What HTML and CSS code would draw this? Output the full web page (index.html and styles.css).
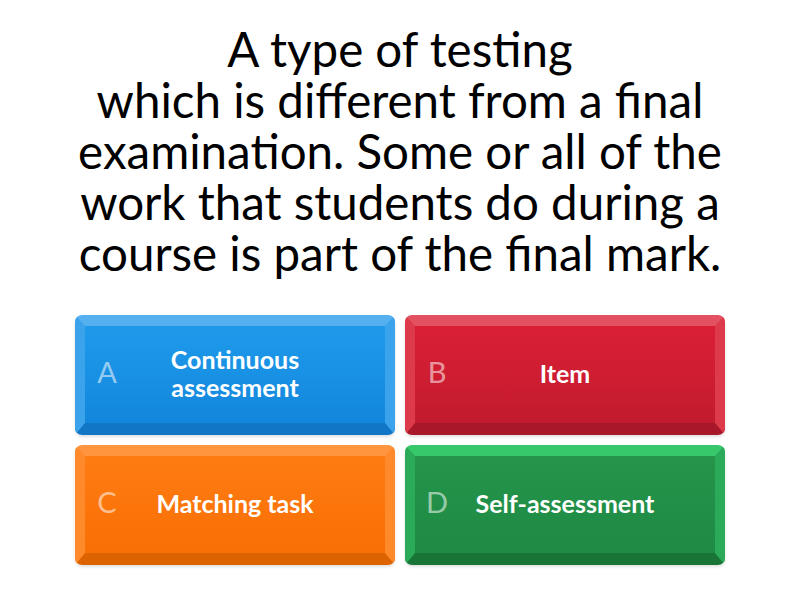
FILE: index.html
```html
<!DOCTYPE html>
<html>
<head>
<meta charset="utf-8">
<link rel="stylesheet" href="styles.css">
</head>
<body>
<main class="quiz">
  <h1 class="question">A type of testing<br>which is different from a final examination. Some or all of the work that students do during a course is part of the final mark.</h1>
  <div class="answers">
    <button class="answer blue"><span class="letter">A</span><span class="text">Continuous<br>assessment</span><span class="spacer"></span></button>
    <button class="answer red"><span class="letter">B</span><span class="text">Item</span><span class="spacer"></span></button>
    <button class="answer orange"><span class="letter">C</span><span class="text">Matching task</span><span class="spacer"></span></button>
    <button class="answer green"><span class="letter">D</span><span class="text">Self-assessment</span><span class="spacer"></span></button>
  </div>
</main>
</body>
</html>
```

FILE: styles.css
```css
html, body {
  margin: 0;
  padding: 0;
  background: #ffffff;
}
body {
  font-family: Lato, "Noto Sans", sans-serif;
  width: 800px;
  height: 600px;
  overflow: hidden;
}
.quiz {
  display: flex;
  flex-direction: column;
  align-items: center;
  padding-top: 23px;
}
.question {
  margin: 0;
  width: 680px;
  text-align: center;
  font-weight: 400;
  font-size: 47.5px;
  line-height: 51px;
  color: #000;
}
.answers {
  margin-top: 37px;
  display: grid;
  grid-template-columns: 320px 320px;
  grid-auto-rows: 120px;
  gap: 10px;
}
.answer {
  box-sizing: border-box;
  display: flex;
  align-items: center;
  padding: 0 4px;
  border-style: solid;
  border-width: 11px 10px 12px 10px;
  border-radius: 7px;
  font-family: inherit;
  color: #fff;
  box-shadow: 0 2px 3px rgba(0,0,0,0.12);
  cursor: pointer;
}
.letter {
  width: 36px;
  flex: none;
  font-size: 29px;
  font-weight: 400;
  color: rgba(255,255,255,0.55);
  text-align: center;
  padding-bottom: 6px;
}
.spacer {
  width: 36px;
  flex: none;
}
.text {
  flex: 1;
  text-align: center;
  font-size: 25px;
  font-weight: 700;
  line-height: 28px;
  padding-bottom: 4px;
}
.blue {
  background: linear-gradient(#1f9aeb, #1287dc);
  border-color: #55b0f0 #3aa3ec #1276c6 #3aa3ec;
}
.red {
  background: linear-gradient(#da1f35, #c31b2e);
  border-color: #e3505f #dd3a4b #a8172a #dd3a4b;
}
.orange {
  background: linear-gradient(#ff7c12, #f86f05);
  border-color: #ff953f #ff8a2b #dd6200 #ff8a2b;
}
.green {
  background: linear-gradient(#24954b, #1f8a44);
  border-color: #36c86a #2bab59 #187536 #2bab59;
}
```
